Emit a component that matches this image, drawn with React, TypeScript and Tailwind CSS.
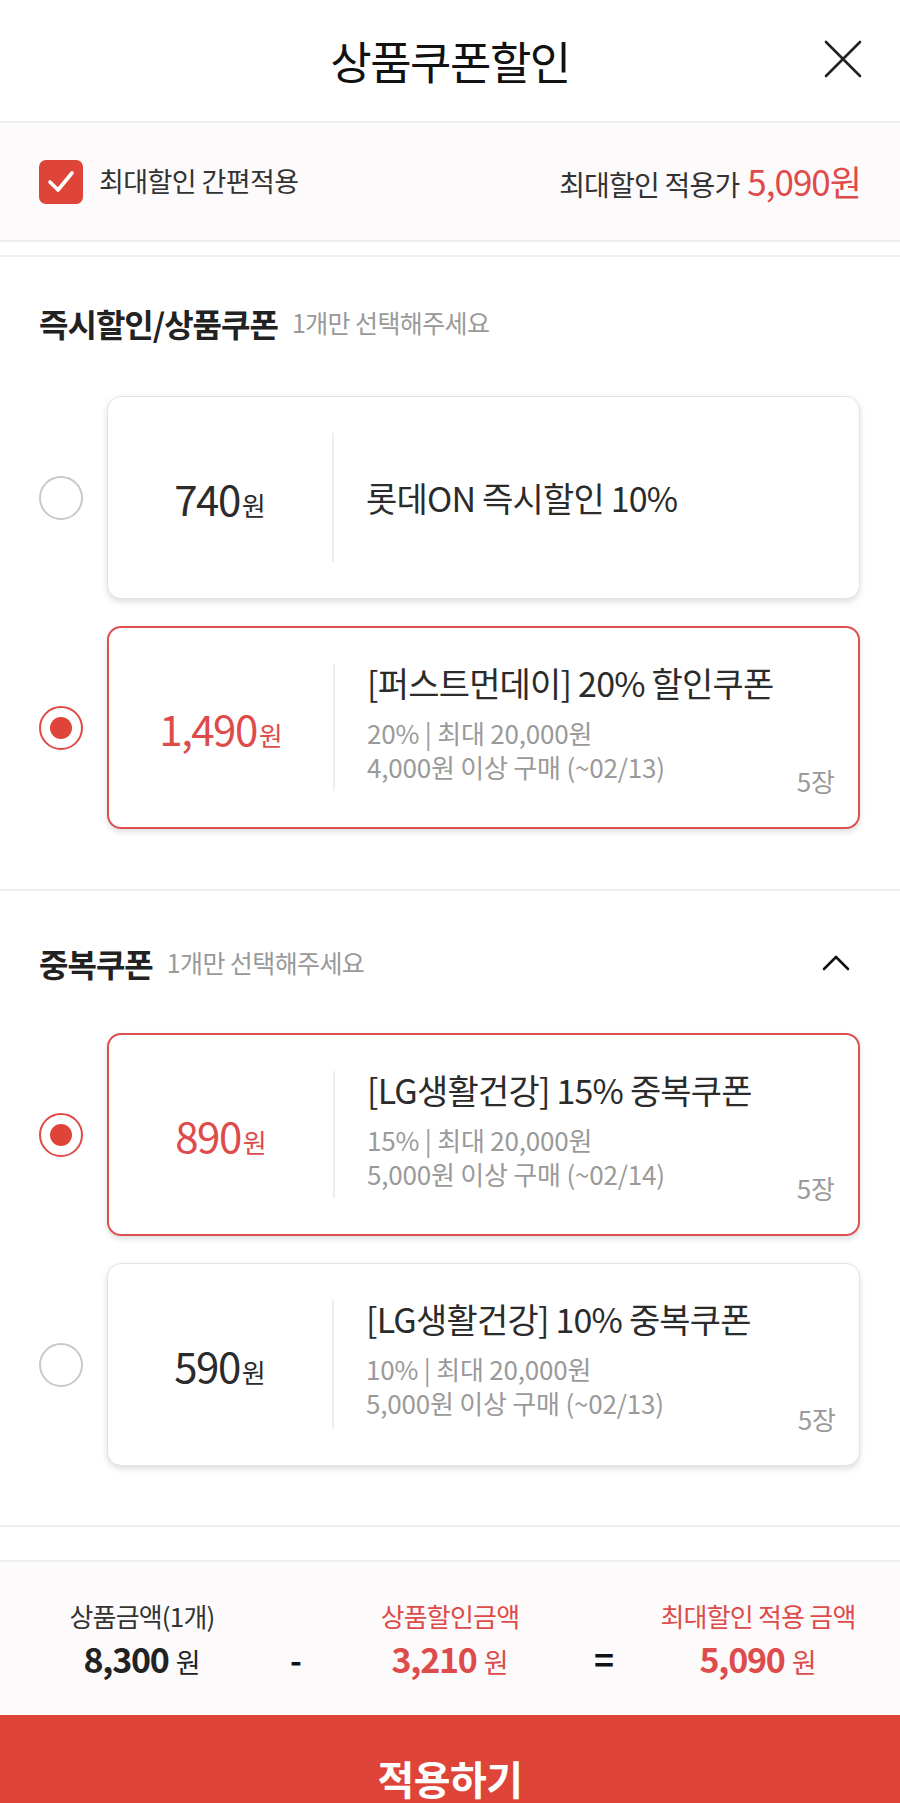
import React from 'react';

const font = { fontFamily: '"Noto Sans CJK KR", "Noto Sans", sans-serif' };

interface Coupon {
  amount: string;
  title: string;
  lines?: string[];
  count?: string;
  selected: boolean;
}

const instant: Coupon[] = [
  { amount: '740', title: '롯데ON 즉시할인 10%', selected: false },
  {
    amount: '1,490',
    title: '[퍼스트먼데이] 20% 할인쿠폰',
    lines: ['20% | 최대 20,000원', '4,000원 이상 구매 (~02/13)'],
    count: '5장',
    selected: true,
  },
];

const duplicate: Coupon[] = [
  {
    amount: '890',
    title: '[LG생활건강] 15% 중복쿠폰',
    lines: ['15% | 최대 20,000원', '5,000원 이상 구매 (~02/14)'],
    count: '5장',
    selected: true,
  },
  {
    amount: '590',
    title: '[LG생활건강] 10% 중복쿠폰',
    lines: ['10% | 최대 20,000원', '5,000원 이상 구매 (~02/13)'],
    count: '5장',
    selected: false,
  },
];

function Radio({ checked }: { checked: boolean }) {
  if (checked) {
    return (
      <div className="w-[44px] h-[44px] shrink-0 rounded-full border-2 border-[#de4a45] flex items-center justify-center">
        <div className="w-[22px] h-[22px] rounded-full bg-[#de4538]" />
      </div>
    );
  }
  return <div className="w-[44px] h-[44px] shrink-0 rounded-full border-2 border-[#c9c9c9]" />;
}

function CouponRow({ c }: { c: Coupon }) {
  return (
    <div className="flex items-center gap-[24px]">
      <Radio checked={c.selected} />
      <div
        className={
          c.selected
            ? 'relative flex-1 h-[203px] rounded-[14px] bg-white border-2 border-[#de5050] shadow-[0_3px_6px_rgba(0,0,0,0.13)] flex items-center'
            : 'relative flex-1 h-[203px] rounded-[14px] bg-white border border-[#e3e3e3] shadow-[0_3px_6px_rgba(0,0,0,0.13)] flex items-center'
        }
      >
        <div className="w-[224px] shrink-0 flex items-baseline justify-center">
          <span
            className={
              c.selected
                ? 'text-[42px] leading-none tracking-[-1.5px] text-[#de4b4b]'
                : 'text-[42px] leading-none tracking-[-1.5px] text-[#2b2b2b]'
            }
          >
            {c.amount}
          </span>
          <span
            className={
              c.selected
                ? 'text-[26px] leading-none ml-[2px] text-[#de4b4b]'
                : 'text-[26px] leading-none ml-[2px] text-[#2b2b2b]'
            }
          >
            원
          </span>
        </div>
        <div className="w-[2px] self-stretch my-[36px] bg-[#eeeeee]" />
        <div className={c.lines ? 'pl-[32px] flex flex-col self-start pt-[34px]' : 'pl-[32px] flex flex-col'}>
          <div className="text-[34px] leading-[42px] tracking-[-0.8px] text-[#2b2b2b] whitespace-nowrap">
            {c.title}
          </div>
          {c.lines && (
            <div className="mt-[12px] flex flex-col">
              {c.lines.map((l) => (
                <div
                  key={l}
                  className="text-[26px] leading-[34px] tracking-[-0.2px] text-[#9a9a9a] whitespace-nowrap"
                >
                  {l}
                </div>
              ))}
            </div>
          )}
        </div>
        {c.count && (
          <div className="absolute right-[23px] bottom-[29px] text-[26px] leading-[34px] text-[#9a9a9a]">
            {c.count}
          </div>
        )}
      </div>
    </div>
  );
}

function SectionTitle({ title, collapsible }: { title: string; collapsible?: boolean }) {
  return (
    <div className="flex items-center h-[40px]">
      <span className="text-[32px] font-bold tracking-[-1px] text-[#222]">{title}</span>
      <span className="ml-[14px] text-[25px] tracking-[-0.6px] text-[#999]">1개만 선택해주세요</span>
      {collapsible && (
        <svg className="ml-auto mr-[10px]" width="28" height="16" viewBox="0 0 28 16" fill="none">
          <path d="M2 14 L14 2 L26 14" stroke="#111" strokeWidth="2.6" strokeLinecap="round" strokeLinejoin="round" />
        </svg>
      )}
    </div>
  );
}

function SummaryCol({ label, value, red }: { label: string; value: string; red?: boolean }) {
  const color = red ? 'text-[#de4b4b]' : 'text-[#222]';
  return (
    <div className="flex flex-col items-center">
      <div
        className={
          red
            ? 'text-[26px] leading-[34px] tracking-[-0.8px] text-[#de4b4b] whitespace-nowrap'
            : 'text-[26px] leading-[34px] tracking-[-0.8px] text-[#333] whitespace-nowrap'
        }
      >
        {label}
      </div>
      <div className="flex items-baseline mt-[6px]">
        <span className={`text-[34px] font-bold tracking-[-1.2px] leading-[40px] ${color}`}>{value}</span>
        <span className={`text-[27px] ml-[7px] ${color}`}>원</span>
      </div>
    </div>
  );
}

function Summary() {
  return (
    <div className="h-[153px] shrink-0 bg-[#fcfafa] grid grid-cols-5 px-[65px] pt-[37px]">
      <SummaryCol label="상품금액(1개)" value="8,300" />
      <div className="flex justify-center pt-[40px]">
        <span className="text-[32px] font-bold text-[#111] leading-[40px]">-</span>
      </div>
      <SummaryCol label="상품할인금액" value="3,210" red />
      <div className="flex justify-center pt-[40px]">
        <span className="text-[34px] font-bold text-[#111] leading-[40px]">=</span>
      </div>
      <SummaryCol label="최대할인 적용 금액" value="5,090" red />
    </div>
  );
}

export default function App() {
  return (
    <div className="w-[900px] h-[1803px] overflow-hidden bg-white flex flex-col" style={font}>
      {/* header */}
      <div className="relative h-[123px] shrink-0 flex items-center justify-center border-b-2 border-[#eeeeee]">
        <span className="text-[45px] tracking-[-1.5px] text-[#111]">상품쿠폰할인</span>
        <svg className="absolute right-[38px] top-[40px]" width="38" height="38" viewBox="0 0 38 38" fill="none">
          <path d="M2 2 L36 36 M36 2 L2 36" stroke="#222" strokeWidth="2.6" strokeLinecap="round" />
        </svg>
      </div>

      {/* easy apply band */}
      <div className="h-[119px] shrink-0 bg-[#fcfafa] border-b-2 border-[#eeeeee] flex items-center px-[39px]">
        <div className="w-[44px] h-[44px] rounded-[7px] bg-[#de4538] flex items-center justify-center">
          <svg width="28" height="24" viewBox="0 0 28 24" fill="none">
            <path d="M3 12 L11 20 L25 3" stroke="#fff" strokeWidth="3.6" strokeLinecap="round" strokeLinejoin="round" />
          </svg>
        </div>
        <span className="ml-[16px] text-[27px] tracking-[-0.6px] text-[#333]">최대할인 간편적용</span>
        <div className="ml-auto flex items-baseline">
          <span className="text-[28px] tracking-[-0.8px] text-[#333]">최대할인 적용가</span>
          <span className="ml-[8px] text-[35px] tracking-[-1px] text-[#de4b4b]">5,090원</span>
        </div>
      </div>
      <div className="h-[15px] shrink-0 border-b-2 border-[#f0f0f0]" />

      {/* instant discount */}
      <div className="shrink-0 pl-[39px] pr-[40px] pt-[46px] pb-[60px] border-b-2 border-[#eeeeee]">
        <SectionTitle title="즉시할인/상품쿠폰" />
        <div className="mt-[53px] flex flex-col gap-[27px]">
          {instant.map((c) => (
            <CouponRow key={c.title} c={c} />
          ))}
        </div>
      </div>

      {/* duplicate coupon */}
      <div className="shrink-0 pl-[39px] pr-[40px] pt-[52px] pb-[59px] border-b-2 border-[#eeeeee]">
        <SectionTitle title="중복쿠폰" collapsible />
        <div className="mt-[50px] flex flex-col gap-[27px]">
          {duplicate.map((c) => (
            <CouponRow key={c.title} c={c} />
          ))}
        </div>
      </div>

      <div className="h-[35px] shrink-0 border-b-2 border-[#eeeeee]" />

      <Summary />

      <button className="h-[126px] shrink-0 w-full bg-[#de4538] flex items-center justify-center">
        <span className="text-[40px] font-bold tracking-[-0.5px] text-white">적용하기</span>
      </button>
    </div>
  );
}
